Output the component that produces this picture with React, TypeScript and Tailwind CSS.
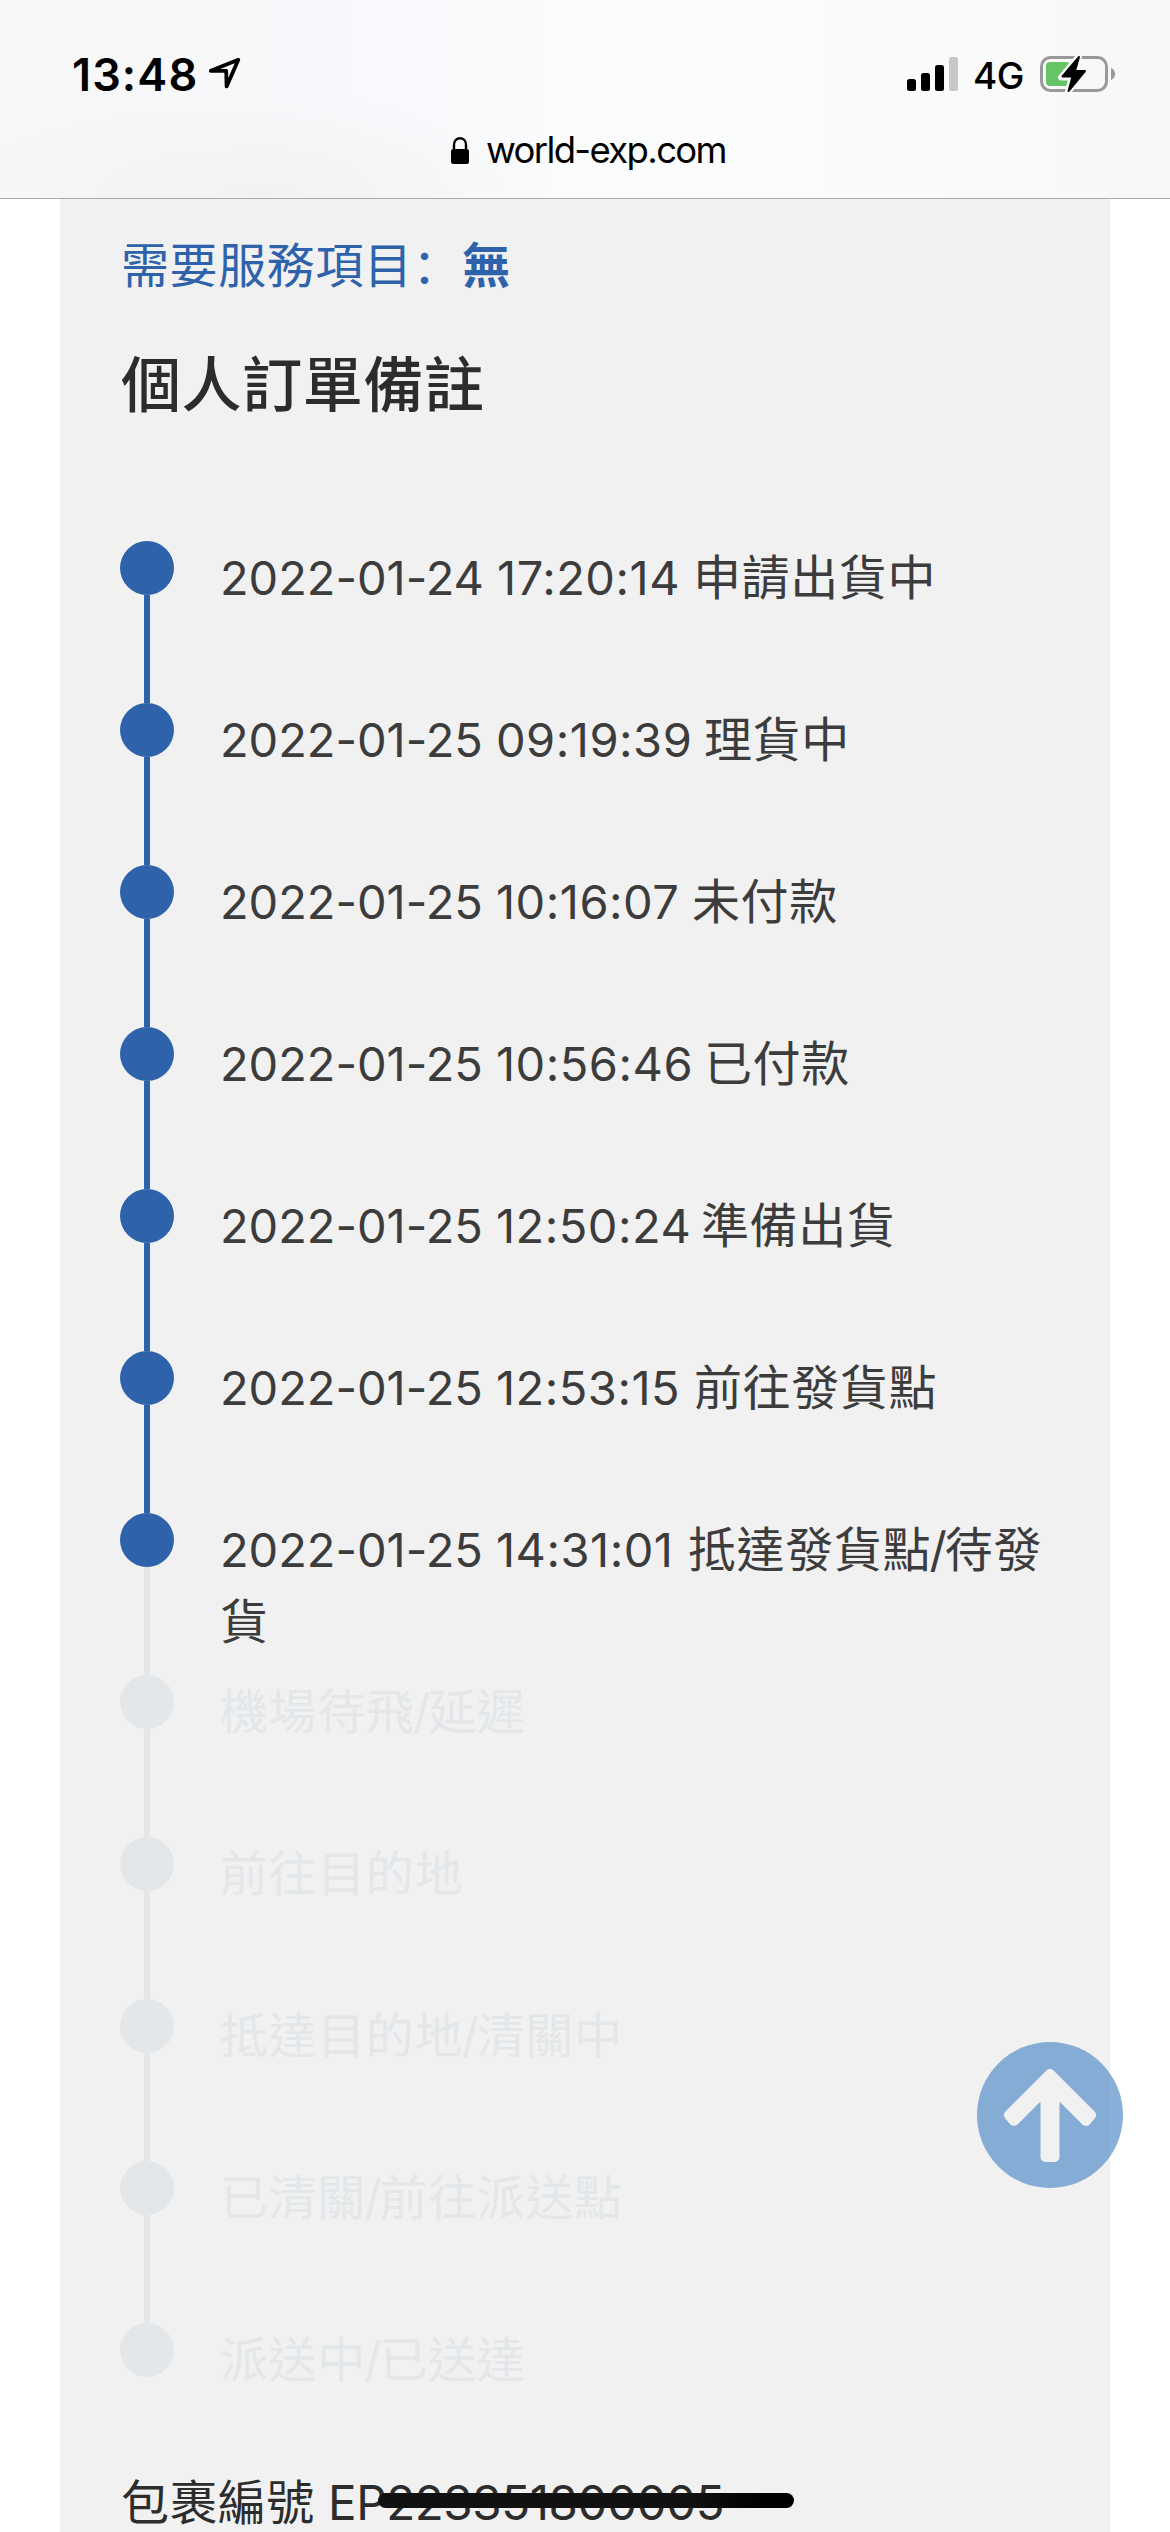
import React from "react";

type Step = { time?: [string, string]; label: string; done: boolean; lineDone?: boolean; width?: string };

const steps: Step[] = [
  { time: ["2022-01-24", "17:20:14"], label: "申請出貨中", done: true, lineDone: true, width: "w-[473px]" },
  { time: ["2022-01-25", "09:19:39"], label: "理貨中", done: true, lineDone: true, width: "w-[484px]" },
  { time: ["2022-01-25", "10:16:07"], label: "未付款", done: true, lineDone: true, width: "w-[472px]" },
  { time: ["2022-01-25", "10:56:46"], label: "已付款", done: true, lineDone: true, width: "w-[484px]" },
  { time: ["2022-01-25", "12:50:24"], label: "準備出貨", done: true, lineDone: true, width: "w-[481px]" },
  { time: ["2022-01-25", "12:53:15"], label: "前往發貨點", done: true, lineDone: true, width: "w-[474px]" },
  { time: ["2022-01-25", "14:31:01"], label: "抵達發貨點/待發貨", done: true, width: "w-[468px]" },
  { label: "機場待飛/延遲", done: false },
  { label: "前往目的地", done: false },
  { label: "抵達目的地/清關中", done: false },
  { label: "已清關/前往派送點", done: false },
  { label: "派送中/已送達", done: false },
];

function StatusBar() {
  return (
    <div className="flex h-[125px] justify-between pl-[72px] pr-[54px] pt-[49px]">
      <div className="flex h-[50px] items-center">
        <span className="w-[135px] whitespace-nowrap pt-px text-[45px] font-semibold leading-[50px] tracking-[1.1px] text-black">13:48</span>
        <svg className="mb-[3px]" width="36" height="36" viewBox="0 0 36 36" fill="none" stroke="black" strokeWidth="3.8" strokeLinejoin="round">
          <path d="M31.3 4.8 L3.8 15.8 H19.2 L19.6 31.4 Z" />
        </svg>
      </div>
      <div className="flex h-[50px] items-center">
        <svg className="mt-[2px]" width="52" height="36" viewBox="0 0 52 36">
          <rect x="0" y="22" width="9" height="12" rx="2.5" />
          <rect x="14" y="16" width="9" height="18" rx="2.5" />
          <rect x="28" y="8" width="9" height="26" rx="2.5" />
          <rect x="42" y="0" width="9" height="34" rx="2.5" fill="#c8c8c8" />
        </svg>
        <span className="ml-[14px] mt-[4px] w-[67px] whitespace-nowrap text-[37px] font-medium leading-[50px] tracking-[-0.5px]">4G</span>
        <svg width="76" height="38" viewBox="0 0 76 38">
          <rect x="1.5" y="2.5" width="65" height="33" rx="9" fill="none" stroke="#999" strokeWidth="3" />
          <path d="M71 13 C76.5 15 76.5 23 71 25 Z" fill="#999" />
          <rect x="6" y="7" width="24" height="24" rx="4" fill="#65c466" />
          <path d="M39 1 L21 22.5 H31.5 L28 37 L46 15.5 H36 Z" fill="#000" stroke="#fafafa" strokeWidth="6" strokeLinejoin="round" />
          <path d="M39 2 L22.5 21.5 H32.5 L28.5 36 L45 16 H35 Z" fill="#000" stroke="#000" strokeWidth="2" strokeLinejoin="round" />
        </svg>
      </div>
    </div>
  );
}

function AddressBar() {
  return (
    <div className="flex h-[52px] items-center pl-[451px]">
      <svg width="18" height="28" viewBox="0 0 18 28">
        <path d="M3 14 V7.5 C3 -0.8 15 -0.8 15 7.5 V14" fill="none" stroke="black" strokeWidth="2.4" />
        <rect x="0" y="12" width="18" height="15" rx="2.5" />
      </svg>
      <span className="-mt-[2px] ml-[17px] whitespace-nowrap text-[36.5px] leading-[52px] tracking-[-1.65px]">world-exp.com</span>
    </div>
  );
}

function Label({ text }: { text: string }) {
  const [before, after] = text.split("/");
  return (
    <span className="tracking-[0.6px]">
      {before}
      {after && <span className="-ml-[1.5px] tracking-[-2px]">/</span>}
      {after}
    </span>
  );
}

function TimelineStep({ step, last }: { step: Step; last: boolean }) {
  return (
    <li className="flex h-[162px] gap-[46px]">
      <div className="flex w-[54px] shrink-0 flex-col items-center">
        <span className={`size-[54px] shrink-0 rounded-full ${step.done ? "bg-[#2e62aa]" : "bg-[#e3e7ea]"}`} />
        {!last && <span className={`w-[6px] grow ${step.lineDone ? "bg-[#2e62aa]" : "bg-[#e3e7ea]"}`} />}
      </div>
      <p className={`w-[840px] pt-px text-[48px] leading-[72px] ${step.done ? "text-[#3c3c3c]" : "text-[#e3e7ea]"}`}>
        {step.time && (
          <span className={`inline-block whitespace-nowrap text-[47px] ${step.width}`}>
            <span className="tracking-[-0.05px]">{step.time[0]} </span>
            <span className="tracking-[0.5px]">{step.time[1]}</span>
          </span>
        )}
        <Label text={step.label} />
      </p>
    </li>
  );
}

export default function App() {
  return (
    <div className="relative flex h-[2532px] w-[1170px] flex-col overflow-hidden bg-white font-['Inter','Noto_Sans_CJK_TC',sans-serif] text-black">
      <header className="h-[199px] shrink-0 border-b border-[#a9a9a9] bg-[radial-gradient(ellipse_300px_110px_at_260px_198px,#f2f2f2,transparent),linear-gradient(90deg,#f7f7f7,#f8f9fc_30%,#fbfcfc_55%,#fafafa_85%,#f7f7f7)]">
        <StatusBar />
        <AddressBar />
      </header>
      <main className="mx-[60px] flex grow flex-col bg-[#f1f1f1] px-[60px]">
        <p className="ml-px mt-[31px] text-[48px] leading-[72px] tracking-[0.6px] text-[#2e62aa]">
          需要服務項目
          <span lang="zh-CN" className="font-['Inter','Noto_Sans_CJK_SC',sans-serif]">：</span>
          <b className="ml-px font-bold">無</b>
        </p>
        <h2 className="ml-px mt-[38px] text-[60px] font-medium leading-[90px] tracking-[0.6px] text-[#2c2c2c]">個人訂單備註</h2>
        <ol className="mt-[111px]">
          {steps.map((step, i) => (
            <TimelineStep key={step.label} step={step} last={i === steps.length - 1} />
          ))}
        </ol>
        <p className="-mt-[18px] ml-px whitespace-nowrap text-[48px] leading-[72px] text-[#2c2c2c]">
          <span className="tracking-[0.4px]">包裹編號</span> <span className="text-[47.5px] tracking-[-0.4px]">EP223351800005</span>
        </p>
      </main>
      <button aria-label="Back to top" className="absolute left-[977px] top-[2042px] size-[146px]">
        <svg width="146" height="146" viewBox="0 0 146 146">
          <circle cx="73" cy="73" r="73" fill="#6699cc" fillOpacity="0.78" />
          <path d="M73 32 L114 73 L109 79 L77.5 47.5 V115 H68.5 V47.5 L37 79 L32 73 Z" fill="#f1f1f1" stroke="#f1f1f1" strokeWidth="10" strokeLinejoin="round" />
        </svg>
      </button>
      <div className="absolute left-[378px] top-[2493px] h-[15px] w-[416px] rounded-full bg-[linear-gradient(90deg,#111_75%,#000_92%)]" />
    </div>
  );
}
